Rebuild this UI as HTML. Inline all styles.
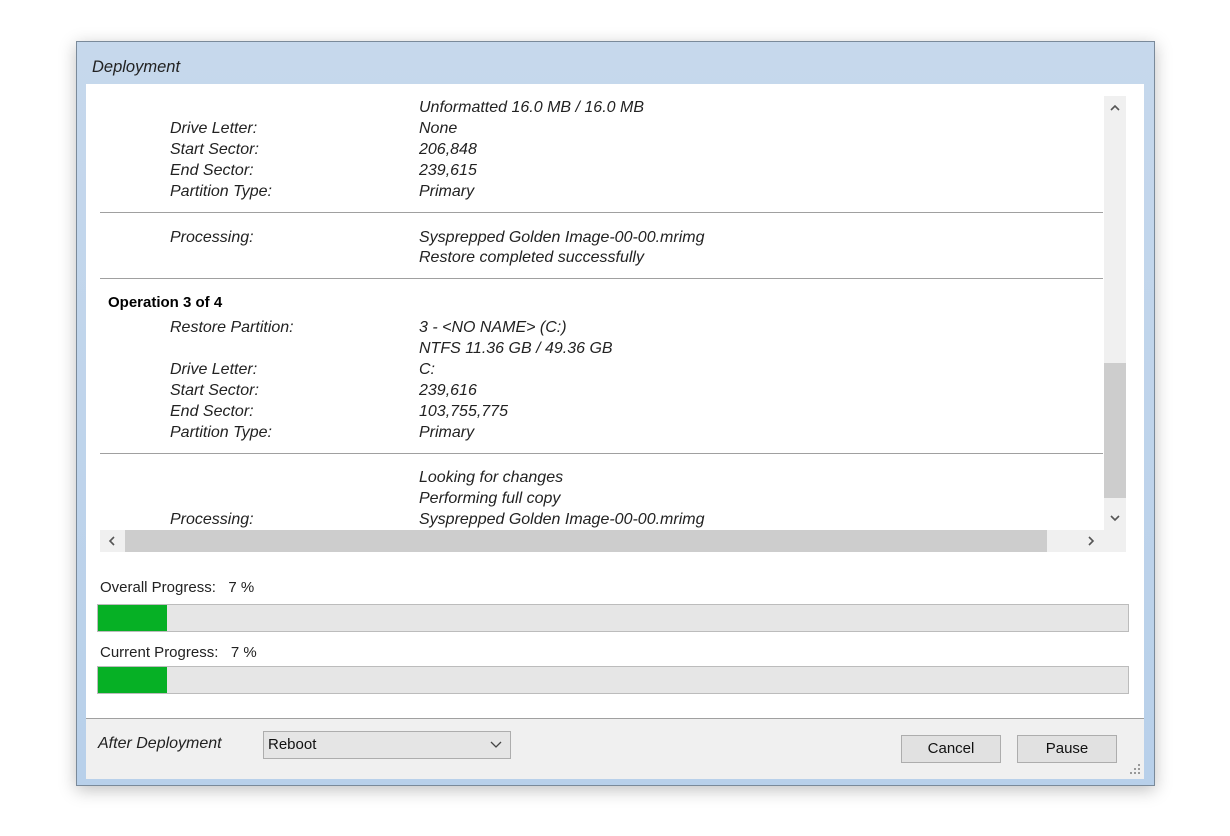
<!DOCTYPE html>
<html><head><style>
body{margin:0;width:1230px;height:836px;background:#fff;position:relative;font-family:"Liberation Sans",sans-serif;overflow:hidden}
.win{position:absolute;left:76px;top:41px;width:1077px;height:743px;border:1px solid #7a8a9a;background:linear-gradient(#c6d8ec,#b8d0ea);box-shadow:0 4px 16px rgba(0,0,0,.25)}
.title{position:absolute;left:15px;top:16px;font-style:italic;font-size:16.5px;color:#222}
.client{position:absolute;left:9px;top:42px;width:1058px;height:694px;background:#fff}
.abs{position:absolute}
.t{position:absolute;font-style:italic;font-size:16px;color:#222;white-space:nowrap;line-height:20px}
.line{position:absolute;left:100px;width:1003px;height:1px;background:#a0a0a0}
.bar{position:absolute;left:97px;width:1030px;height:26px;background:#e6e6e6;border:1px solid #bcbcbc}
.bar div{height:100%;width:69px;background:#06b025}
.btn{position:absolute;top:735px;width:98px;height:26px;background:#e1e1e1;border:1px solid #adadad;font-size:15px;text-align:center;line-height:26px;color:#111}
</style></head><body>
<div class="win"><div class="title">Deployment</div><div class="client"></div></div>
<div class="abs" style="left:86px;top:718px;width:1058px;height:60px;background:#f0f0f0;border-top:1px solid #a0a0a0"></div>
<div class="abs" style="left:100px;top:96px;width:1026px;height:456px;background:#fff"></div>
<div class="abs" style="left:1104px;top:96px;width:22px;height:434px;background:#f0f0f0"></div>
<div class="abs" style="left:1104px;top:363px;width:22px;height:135px;background:#cdcdcd"></div>
<div class="abs" style="left:100px;top:530px;width:1026px;height:22px;background:#f0f0f0"></div>
<div class="abs" style="left:125px;top:530px;width:922px;height:22px;background:#cdcdcd"></div>
<svg class="abs" style="left:1109px;top:104px" width="12" height="8"><path d="M2 6L6 2L10 6" stroke="#555" fill="none" stroke-width="1.6"/></svg>
<svg class="abs" style="left:1109px;top:514px" width="12" height="8"><path d="M2 2L6 6L10 2" stroke="#555" fill="none" stroke-width="1.6"/></svg>
<svg class="abs" style="left:108px;top:535px" width="8" height="12"><path d="M6 2L2 6L6 10" stroke="#555" fill="none" stroke-width="1.6"/></svg>
<svg class="abs" style="left:1087px;top:535px" width="8" height="12"><path d="M2 2L6 6L2 10" stroke="#555" fill="none" stroke-width="1.6"/></svg>

<div class="t" style="left:419px;top:98px">Unformatted 16.0 MB / 16.0 MB</div>
<div class="t" style="left:170px;top:119px">Drive Letter:</div><div class="t" style="left:419px;top:119px">None</div>
<div class="t" style="left:170px;top:140px">Start Sector:</div><div class="t" style="left:419px;top:140px">206,848</div>
<div class="t" style="left:170px;top:161px">End Sector:</div><div class="t" style="left:419px;top:161px">239,615</div>
<div class="t" style="left:170px;top:182px">Partition Type:</div><div class="t" style="left:419px;top:182px">Primary</div>
<div class="line" style="top:212px"></div>
<div class="t" style="left:170px;top:228px">Processing:</div><div class="t" style="left:419px;top:228px">Sysprepped Golden Image-00-00.mrimg</div>
<div class="t" style="left:419px;top:248px">Restore completed successfully</div>
<div class="line" style="top:278px"></div>
<div class="t" style="left:108px;top:293px;font-style:normal;font-weight:bold;font-size:15px;color:#000">Operation 3 of 4</div>
<div class="t" style="left:170px;top:318px">Restore Partition:</div><div class="t" style="left:419px;top:318px">3 - &lt;NO NAME&gt; (C:)</div>
<div class="t" style="left:419px;top:339px">NTFS 11.36 GB / 49.36 GB</div>
<div class="t" style="left:170px;top:360px">Drive Letter:</div><div class="t" style="left:419px;top:360px">C:</div>
<div class="t" style="left:170px;top:381px">Start Sector:</div><div class="t" style="left:419px;top:381px">239,616</div>
<div class="t" style="left:170px;top:402px">End Sector:</div><div class="t" style="left:419px;top:402px">103,755,775</div>
<div class="t" style="left:170px;top:423px">Partition Type:</div><div class="t" style="left:419px;top:423px">Primary</div>
<div class="line" style="top:453px"></div>
<div class="t" style="left:419px;top:468px">Looking for changes</div>
<div class="t" style="left:419px;top:489px">Performing full copy</div>
<div class="t" style="left:170px;top:510px">Processing:</div><div class="t" style="left:419px;top:510px">Sysprepped Golden Image-00-00.mrimg</div>

<div class="t" style="left:100px;top:578px;font-style:normal;font-size:15px">Overall Progress:&nbsp;&nbsp;&nbsp;7 %</div>
<div class="bar" style="top:604px"><div></div></div>
<div class="t" style="left:100px;top:643px;font-style:normal;font-size:15px">Current Progress:&nbsp;&nbsp;&nbsp;7 %</div>
<div class="bar" style="top:666px"><div></div></div>

<div class="t" style="left:98px;top:734px">After Deployment</div>
<div class="abs" style="left:263px;top:731px;width:246px;height:26px;background:#e5e5e5;border:1px solid #adadad;font-size:15px;line-height:26px;color:#111"><span style="padding-left:4px">Reboot</span>
<svg style="position:absolute;right:8px;top:9px" width="12" height="8"><path d="M1 1L6 6L11 1" stroke="#444" fill="none" stroke-width="1.3"/></svg></div>
<div class="btn" style="left:901px">Cancel</div>
<div class="btn" style="left:1017px">Pause</div>
<svg class="abs" style="left:1130px;top:762px" width="12" height="12"><g fill="#999"><rect x="8" y="2" width="2" height="2"/><rect x="4" y="6" width="2" height="2"/><rect x="8" y="6" width="2" height="2"/><rect x="0" y="10" width="2" height="2"/><rect x="4" y="10" width="2" height="2"/><rect x="8" y="10" width="2" height="2"/></g></svg>
</body></html>
